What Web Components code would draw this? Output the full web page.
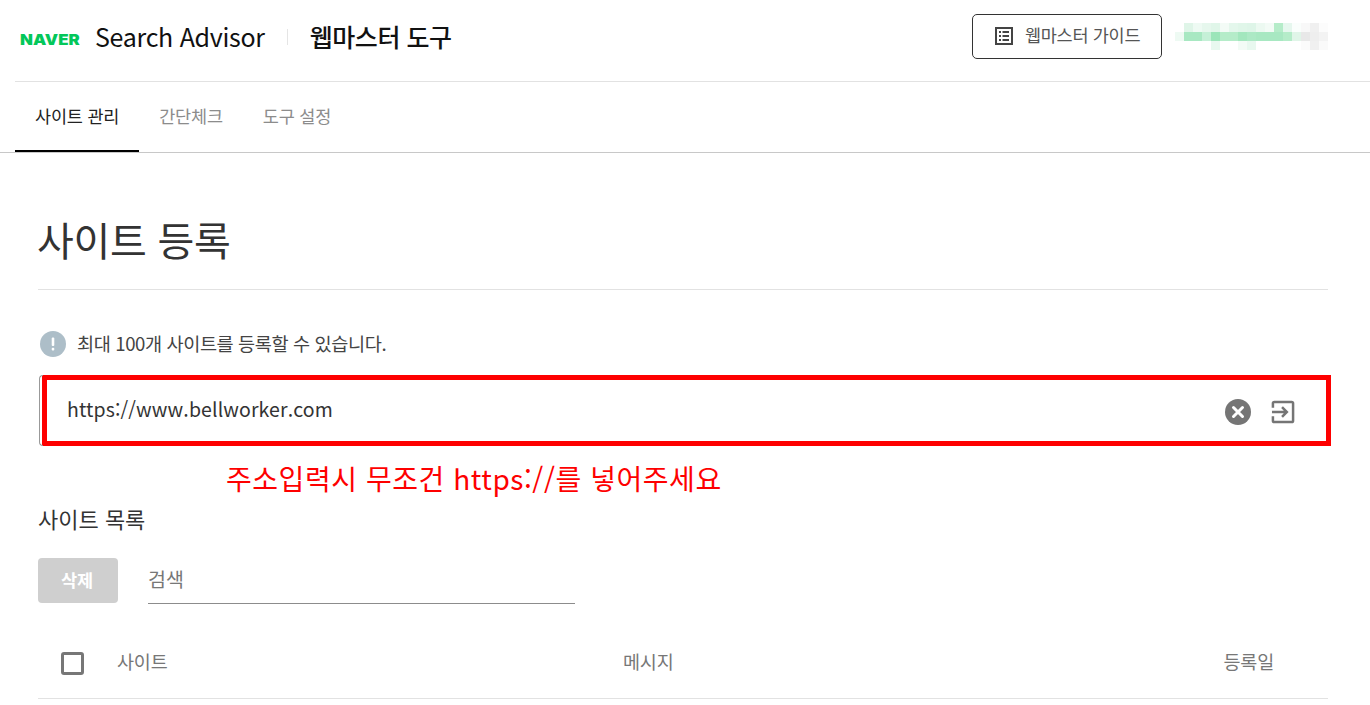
<!DOCTYPE html>
<html lang="ko">
<head>
<meta charset="utf-8">
<title>Search Advisor</title>
<style>
  html, body { margin: 0; padding: 0; background: #fff; overflow: hidden; }
  body { width: 1370px; height: 705px; font-family: "Noto Sans CJK KR", "Noto Sans", sans-serif; color: #222; }
</style>
</head>
<body>
<sa-header></sa-header>
<sa-tabs>
  <sa-tab active>사이트 관리</sa-tab>
  <sa-tab>간단체크</sa-tab>
  <sa-tab>도구 설정</sa-tab>
</sa-tabs>
<sa-page heading="사이트 등록">
  <sa-notice>최대 100개 사이트를 등록할 수 있습니다.</sa-notice>
  <sa-url-input value="https://www.bellworker.com"></sa-url-input>
  <sa-annotation>주소입력시 무조건 https://를 넣어주세요</sa-annotation>
  <sa-site-list></sa-site-list>
</sa-page>

<script>
class SaHeader extends HTMLElement {
	constructor() {
		super();
		this.attachShadow({ mode: 'open' });
	}

	// pixelated account name, one string of colours per row
	getBlur() {
		const rows = [
			',#dff5e8,#eefaf3,#e6f7ed,#e0f6e9,#f3fbf6,#e4f7ec,#e0f6e9,#def5e8,#ecf9f1,#f3fbf6,#b5ecc9,#e6f7ee,#fafefc,#f8f8f8,#f0f0f0,#fcfcfc',
			'#eefaf3,#a8e8c2,#a8e8c2,#c5f0d7,#9be5b9,#b5ecc9,#b5ecc9,#a3e7be,#ace9c5,#a8e8c2,#a8e8c2,#a8e8c2,#b5ecc9,#e0f5e8,#e8e8e8,#eeeeee,#f3f3f3',
			',,,,#e8f8ef,,,#f3fbf6,#e8f8ef,,,,,,#fbfbfb,#f0f0f0,#fafafa'
		];
		return rows.map(r => r.split(',').map(c => `<i style="background:${c || 'transparent'}"></i>`).join('')).join('');
	}

	connectedCallback() {
		this.shadowRoot.innerHTML = `
      <style>
        :host { display: block; margin-left: 15px; height: 81px; border-bottom: 1px solid #e2e2e2; }
        .bar { display: flex; align-items: center; height: 100%; padding-left: 5px; padding-right: 42px; padding-bottom: 8px; box-sizing: border-box; }
        .naver { font: 900 15px Inter, sans-serif; color: #03c75a; width: 60px; margin-top: 6px; transform: scaleX(1.12); transform-origin: left; }
        .product { font-size: 25px; letter-spacing: -0.3px; color: #111; margin: -2px 0 0 15px; }
        .sep { width: 1px; height: 16px; background: #e5e5e5; margin: 0 22px 0 22px; }
        .tool { font-size: 25px; font-weight: 500; letter-spacing: -0.45px; color: #111; margin-top: -2px; }
        .guide { margin-left: auto; display: flex; align-items: center; gap: 12px; width: 190px; height: 45px; box-sizing: border-box; border: 1px solid #333; border-radius: 5px; padding-left: 22px; font-size: 17.5px; color: #555; letter-spacing: -0.3px; }
        .guide svg { width: 18px; height: 18px; margin-bottom: 1px; }
        .guide span { margin-bottom: 4px; }
        .blur { display: grid; grid-template-columns: repeat(17, 9px); grid-auto-rows: 9px; margin-left: 13px; }
        .blur i { display: block; }
      </style>
      <div class="bar">
        <span class="naver">NAVER</span>
        <span class="product">Search Advisor</span>
        <span class="sep"></span>
        <span class="tool">웹마스터 도구</span>
        <div class="guide">
          <svg viewBox="0 0 18 18"><path fill="#444" fill-rule="evenodd" d="M0 0h18v18H0zM2 2v14h14V2z"/><path fill="#444" d="M4 4h2v2H4zM7.500 4H14v2H7.500zM4 8h2v2H4zM7.500 8H14v2H7.500zM4 12h2v2H4zM7.500 12H14v2H7.500z"/></svg>
          <span>웹마스터 가이드</span>
        </div>
        <div class="blur">${this.getBlur()}</div>
      </div>
    `;
	}
}

class SaTabs extends HTMLElement {
	constructor() {
		super();
		this.attachShadow({ mode: 'open' }).innerHTML = `
      <style>
        :host { display: flex; height: 71px; padding-left: 15px; border-bottom: 1px solid #c8c8c8; box-sizing: border-box; }
      </style>
      <slot></slot>
    `;
	}
}

class SaTab extends HTMLElement {
	constructor() {
		super();
		this.attachShadow({ mode: 'open' }).innerHTML = `
      <style>
        :host { display: flex; align-items: center; height: 70px; padding: 0 20px 3px; box-sizing: border-box; font-size: 17.5px; letter-spacing: -0.2px; color: #8c8c8c; }
        :host([active]) { color: #222; border-bottom: 2px solid #000; padding-bottom: 1px; }
      </style>
      <slot></slot>
    `;
	}
}

class SaPage extends HTMLElement {
	constructor() {
		super();
		this.attachShadow({ mode: 'open' });
	}

	connectedCallback() {
		this.shadowRoot.innerHTML = `
      <style>
        :host { display: block; padding: 0 42px 0 38px; }
        h1 { margin: 0; height: 137px; box-sizing: border-box; padding-top: 57px; border-bottom: 1px solid #e2e2e2; font-size: 40px; line-height: 58px; font-weight: 400; color: #333; letter-spacing: -0.3px; text-indent: -1px; }
      </style>
      <h1>${this.getAttribute('heading')}</h1>
      <slot></slot>
    `;
	}
}

class SaNotice extends HTMLElement {
	constructor() {
		super();
		this.attachShadow({ mode: 'open' }).innerHTML = `
      <style>
        :host { display: flex; align-items: center; gap: 11px; margin-top: 39px; height: 28px; padding-left: 2px; font-size: 18.6px; letter-spacing: -0.4px; color: #444; }
        svg { width: 26px; height: 26px; flex: none; margin-top: 2px; }
        div { margin-bottom: 2px; }
      </style>
      <svg viewBox="0 0 26 26">
        <circle cx="13" cy="13" r="13" fill="#adbec8"/>
        <rect x="11.700" y="6.500" width="2.600" height="8.500" rx="1" fill="#fff"/>
        <rect x="11.700" y="16.800" width="2.600" height="2.700" rx="1" fill="#fff"/>
      </svg>
      <div><slot></slot></div>
    `;
	}
}

class SaUrlInput extends HTMLElement {
	constructor() {
		super();
		this.attachShadow({ mode: 'open' });
	}

	connectedCallback() {
		this.shadowRoot.innerHTML = `
      <style>
        :host { display: block; margin: 18px -3px 0 1px; height: 71px; }
        .box { position: relative; display: flex; align-items: center; height: 100%; box-sizing: border-box; border: 5px solid #fe0000; padding: 0 31px 4px 20px; margin-left: 3px; }
        .box::before { content: ''; position: absolute; left: -8px; top: -5px; bottom: -5px; width: 4px; box-sizing: border-box; border: 1px solid #999; border-right: 0; border-radius: 4px 0 0 4px; }
        .value { flex: 1; font-size: 19.5px; letter-spacing: 0.12px; color: #333; }
        svg { display: block; flex: none; margin-top: 7px; }
        .clear { margin-right: 20px; width: 26px; height: 26px; }
        .go { width: 24px; height: 24px; }
      </style>
      <div class="box">
        <span class="value">${this.getAttribute('value')}</span>
        <svg class="clear" viewBox="0 0 26 26"><circle cx="13" cy="13" r="13" fill="#757575"/><path d="M8.500 8.500l9 9M17.500 8.500l-9 9" stroke="#fff" stroke-width="3" stroke-linecap="round"/></svg>
        <svg class="go" viewBox="0 0 25 25" fill="none" stroke="#757575" stroke-width="2.600"><path d="M2 8V3.500A1.500 1.500 0 0 1 3.500 2h18A1.500 1.500 0 0 1 23 3.500v18a1.500 1.500 0 0 1-1.500 1.500h-18A1.500 1.500 0 0 1 2 21.500V17"/><path d="M1 12.500h15M11.500 7.500l5 5-5 5"/></svg>
      </div>
    `;
	}
}

class SaAnnotation extends HTMLElement {
	constructor() {
		super();
		this.attachShadow({ mode: 'open' }).innerHTML = `
      <style>
        :host { display: block; margin: 11px 0 0 188px; height: 44px; line-height: 42px; font-size: 28px; color: #fe0000; white-space: nowrap; letter-spacing: 0.55px; }
      </style>
      <slot></slot>
    `;
	}
}

class SaSiteList extends HTMLElement {
	constructor() {
		super();
		this.attachShadow({ mode: 'open' }).innerHTML = `
      <style>
        :host { display: block; }
        h2 { margin: 2px 0 0; font-size: 22px; font-weight: 400; line-height: 30px; letter-spacing: 0; color: #333; }
        .tools { display: flex; align-items: flex-start; gap: 30px; margin-top: 25px; }
        .del { width: 80px; height: 45px; display: flex; align-items: center; justify-content: center; background: #cfcfcf; border-radius: 4px; color: #fff; font-size: 17.5px; font-weight: 700; padding: 0 2px 3px 0; box-sizing: border-box; }
        .search { width: 427px; height: 46px; box-sizing: border-box; border-bottom: 1px solid #8c8c8c; font-size: 19.5px; color: #777; line-height: 42px; }
        .head { display: grid; grid-template-columns: 79px 506px 1fr auto; align-items: center; height: 95px; padding-top: 20px; border-bottom: 1px solid #e2e2e2; box-sizing: border-box; font-size: 18.5px; color: #777; letter-spacing: -0.2px; }
        .check { width: 23px; height: 23px; box-sizing: border-box; border: 3px solid #777; border-radius: 3px; margin-left: 23px; margin-top: 5px; }
        .date { padding-right: 54px; }
      </style>
      <h2>사이트 목록</h2>
      <div class="tools">
        <div class="del">삭제</div>
        <div class="search">검색</div>
      </div>
      <div class="head">
        <span class="check"></span>
        <span>사이트</span>
        <span>메시지</span>
        <span class="date">등록일</span>
      </div>
    `;
	}
}

customElements.define('sa-header', SaHeader);
customElements.define('sa-tabs', SaTabs);
customElements.define('sa-tab', SaTab);
customElements.define('sa-page', SaPage);
customElements.define('sa-notice', SaNotice);
customElements.define('sa-url-input', SaUrlInput);
customElements.define('sa-annotation', SaAnnotation);
customElements.define('sa-site-list', SaSiteList);
</script>
</body>
</html>
